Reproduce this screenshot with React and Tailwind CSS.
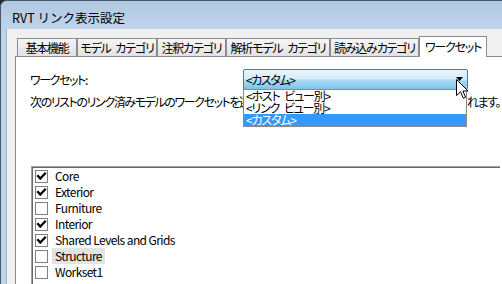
const tabs = [
  { label: "基本機能", w: "w-[60px]" },
  { label: "モデル\u2002カテゴリ", w: "w-[80px]" },
  { label: "注釈カテゴリ", w: "w-[69px]" },
  { label: "解析モデル\u2002カテゴリ", w: "w-[104px]" },
  { label: "読み込みカテゴリ", w: "w-[89px]" },
];

const items = [
  { name: "Core", checked: true },
  { name: "Exterior", checked: true },
  { name: "Furniture", checked: false },
  { name: "Interior", checked: true },
  { name: "Shared Levels and Grids", checked: true },
  { name: "Structure", checked: false, focus: true },
  { name: "Workset1", checked: false },
];

function Check({ checked }) {
  return (
    <div className="w-[13px] h-[13px] shrink-0 border border-[#7f7f7f] bg-white">
      {checked && (
        <svg width="11" height="11" viewBox="0 0 11 11" className="block">
          <polyline points="2,5 4.3,7.6 9,2.6" fill="none" stroke="#000" strokeWidth="2.2" strokeLinecap="square" />
        </svg>
      )}
    </div>
  );
}

export default function App() {
  return (
    <div className="w-[502px] h-[284px] overflow-hidden bg-[#2b2b2b] font-['Noto_Sans_CJK_JP','Noto_Sans',sans-serif] text-black text-[12px] [font-feature-settings:'palt']">
      <div className="h-full flex flex-col rounded-tl-[7px] border-t border-l border-[#4a5868] bg-[#bcd3ea] overflow-hidden">
        <div className="h-[28px] shrink-0 flex items-center pl-[11px] pt-[5px] bg-gradient-to-b from-[#b0c9e3] to-[#bfd4ea]">
          <span className="text-[12.5px] leading-[14px] [font-feature-settings:normal] whitespace-nowrap">RVT リンク表示設定</span>
        </div>
        <div className="flex-1 ml-[5px] flex flex-col bg-[#f0f0f0] border-l border-[#a3b5c8] pl-[8px] pt-[7px]">
          <div className="h-[20px] flex items-end pl-[2px] shrink-0">
            {tabs.map((t) => (
              <div
                key={t.label}
                className={`${t.w} h-[18px] shrink-0 flex items-center justify-center border-t border-l border-r border-[#898c95] bg-gradient-to-b from-[#f6f6f6] to-[#e2e2e2] leading-[12px] whitespace-nowrap tracking-[-1.2px]`}
              >
                {t.label}
              </div>
            ))}
            <div className="w-[68px] h-[21px] mb-[-1px] relative z-10 shrink-0 flex items-center justify-center border-t border-l border-r border-[#898c95] bg-white leading-[12px] whitespace-nowrap pb-[1px] tracking-[-1.2px]">
              ワークセット
            </div>
          </div>
          <div className="flex-1 flex flex-col border-t border-l border-[#898c95] bg-white pl-[14px] pr-[2px] pt-[12px]">
            <div className="flex items-center h-[21px] relative z-20">
              <div className="w-[213px] shrink-0 leading-[12px] whitespace-nowrap tracking-[-1.4px]">ワークセット:</div>
              <div className="relative w-[225px] h-[21px] shrink-0 border border-[#3c7fb1] rounded-[2px] bg-[linear-gradient(to_bottom,#eaf6fd_0%,#d3edfa_45%,#a9dbf6_55%,#7ec3ea_100%)] flex items-center pl-[2px]">
                <span className="leading-[12px] whitespace-nowrap tracking-[-1.4px]">&lt;カスタム&gt;</span>
                <svg width="7" height="4" viewBox="0 0 7 4" className="absolute left-[212px] top-[7px]">
                  <polygon points="0,0 7,0 3.5,4" fill="#000" />
                </svg>
                <div className="absolute left-[-1px] top-[19px] w-[224px] border border-[#8a8a8a] bg-white flex flex-col tracking-[-1.2px]">
                  <div className="h-[12px] leading-[12px] pl-[2px] whitespace-nowrap">&lt;ホスト{"\u2002"}ビュー別&gt;</div>
                  <div className="h-[12px] leading-[12px] pl-[2px] whitespace-nowrap">&lt;リンク{"\u2002"}ビュー別&gt;</div>
                  <div className="h-[12px] leading-[12px] pl-[2px] whitespace-nowrap bg-[#3399ff] text-white">&lt;カスタム&gt;</div>
                </div>
                <svg width="13" height="21" viewBox="0 0 13 21" className="absolute left-[212px] top-[9px] z-30">
                  <polygon
                    points="0.5,0.5 0.5,16.5 4.5,12.8 7.3,19.3 9.6,18.3 6.9,12 12,12"
                    fill="#fff"
                    stroke="#000"
                    strokeWidth="1"
                    strokeLinejoin="miter"
                  />
                </svg>
              </div>
            </div>
            <div className="flex mt-[6px] h-[12px] leading-[12px] tracking-[-1.4px]">
              <span className="flex-1 min-w-0 overflow-hidden whitespace-nowrap">次のリストのリンク済みモデルのワークセットを選択してください。選択したワークセットが開か</span>
              <span className="shrink-0 whitespace-nowrap">れます。</span>
            </div>
            <div className="flex-1 mt-[58px] ml-[1px] border-t border-l border-[#a0a0a0] flex flex-col">
              <div className="flex-1 border-t border-l border-[#696969] pl-[2px] flex flex-col">
                {items.map((it) => (
                  <div key={it.name} className="h-[16px] flex items-center gap-[4px]">
                    <Check checked={it.checked} />
                    <span className={`h-[16px] leading-[16px] px-[3px] whitespace-nowrap tracking-[-0.6px] ${it.focus ? "bg-[#e3e3e3]" : ""}`}>
                      {it.name}
                    </span>
                  </div>
                ))}
              </div>
            </div>
          </div>
        </div>
      </div>
    </div>
  );
}
